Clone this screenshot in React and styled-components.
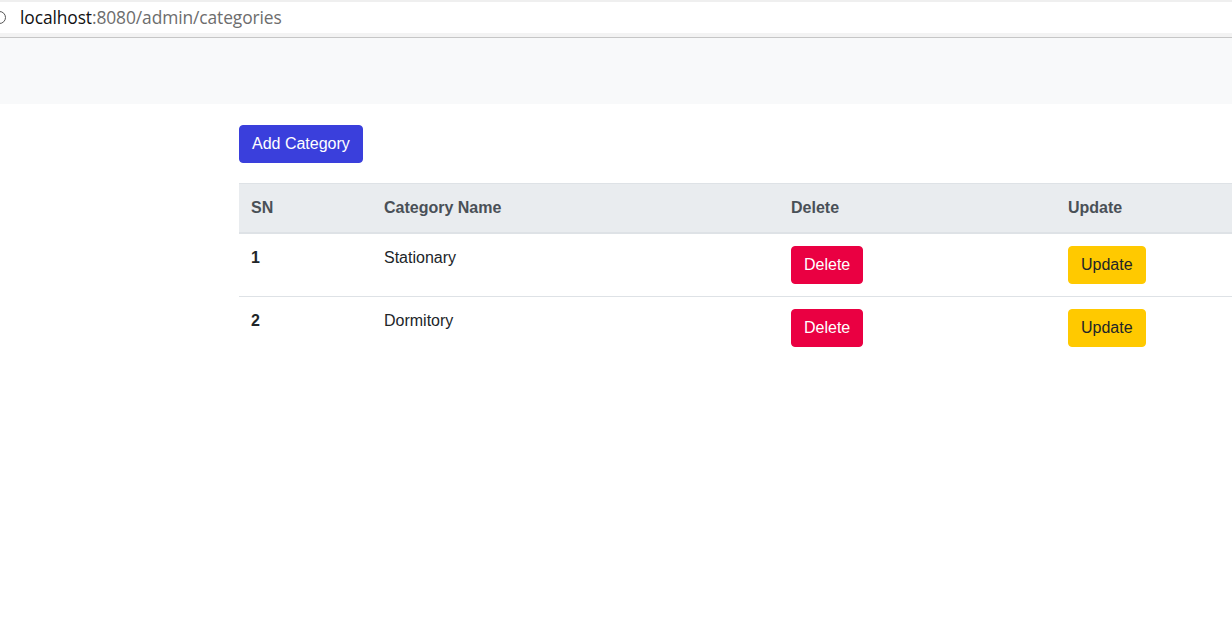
import React from "react";
import styled, { createGlobalStyle } from "styled-components";

const categories = [
  { id: 1, name: "Stationary" },
  { id: 2, name: "Dormitory" },
];

export default function App() {
  return (
    <>
      <GlobalStyle />
      <AddressBar>
        <InfoIcon />
        <Url>
          <Host>localhost</Host>:8080/admin/categories
        </Url>
      </AddressBar>

      <Navbar />

      <Main>
        <PrimaryButton>Add Category</PrimaryButton>

        <Table>
          <colgroup>
            <col style={{ width: 133 }} />
            <col style={{ width: 407 }} />
            <col style={{ width: 277 }} />
            <col style={{ width: 333 }} />
          </colgroup>
          <thead>
            <tr>
              <Th>SN</Th>
              <Th>Category Name</Th>
              <Th>Delete</Th>
              <Th>Update</Th>
            </tr>
          </thead>
          <tbody>
            {categories.map((c) => (
              <tr key={c.id}>
                <Td $bold>{c.id}</Td>
                <Td>{c.name}</Td>
                <Td>
                  <ActionButton $variant="danger">Delete</ActionButton>
                </Td>
                <Td>
                  <ActionButton $variant="warning">Update</ActionButton>
                </Td>
              </tr>
            ))}
          </tbody>
        </Table>
      </Main>
    </>
  );
}

const GlobalStyle = createGlobalStyle`
  html, body {
    margin: 0;
    padding: 0;
    background: #fff;
    overflow: hidden;
  }
  body {
    font-family: "Liberation Sans", Arial, sans-serif;
    font-size: 16px;
    line-height: 1.5;
    color: #212529;
  }
`;

const AddressBar = styled.div`
  height: 31px;
  border-top: 2px solid #efefef;
  border-bottom: 4px solid #f3f3f3;
  box-shadow: 0 1px 0 #c6c6c6;
  margin-bottom: 1px;
  background: #fff;
  display: flex;
  align-items: center;
  position: relative;
`;

/* the page-info icon, cut off by the left edge */
const InfoIcon = styled.span`
  position: absolute;
  left: -7px;
  top: 9px;
  width: 11px;
  height: 11px;
  border: 1.5px solid #555;
  border-radius: 50%;
`;

const Url = styled.div`
  margin-left: 20px;
  font-family: "Open Sans", "DejaVu Sans", sans-serif;
  font-size: 17.4px;
  letter-spacing: -0.1px;
  color: #6d6d6d;
`;

const Host = styled.span`
  color: #111;
`;

const Navbar = styled.nav`
  height: 66px;
  background: #f8f9fa;
`;

const Main = styled.main`
  padding: 21px 0 0 239px;
  overflow: hidden;
`;

const PrimaryButton = styled.button`
  display: block;
  font-family: inherit;
  font-size: 16px;
  line-height: 24px;
  padding: 6px 12px;
  border: 1px solid #3a3fdc;
  border-radius: 4px;
  background: #3a3fdc;
  color: #fff;
  cursor: pointer;
`;

const Table = styled.table`
  margin-top: 20px;
  width: 1150px;
  border-collapse: collapse;
  table-layout: fixed;
`;

const Th = styled.th`
  text-align: left;
  padding: 12px;
  line-height: 24px;
  font-weight: 700;
  color: #495057;
  background: #e9ecef;
  border-top: 1px solid #dee2e6;
  border-bottom: 2px solid #dee2e6;
`;

const Td = styled.td`
  padding: 12px;
  line-height: 24px;
  vertical-align: top;
  border-top: 1px solid #dee2e6;
  font-weight: ${({ $bold }) => ($bold ? 700 : 400)};
`;

const ActionButton = styled.button`
  font-family: inherit;
  font-size: 16px;
  line-height: 24px;
  padding: 6px 12px;
  border-radius: 4px;
  cursor: pointer;
  border: 1px solid
    ${({ $variant }) => ($variant === "danger" ? "#ea0042" : "#ffc900")};
  background: ${({ $variant }) => ($variant === "danger" ? "#ea0042" : "#ffc900")};
  color: ${({ $variant }) => ($variant === "danger" ? "#fff" : "#212529")};
`;
